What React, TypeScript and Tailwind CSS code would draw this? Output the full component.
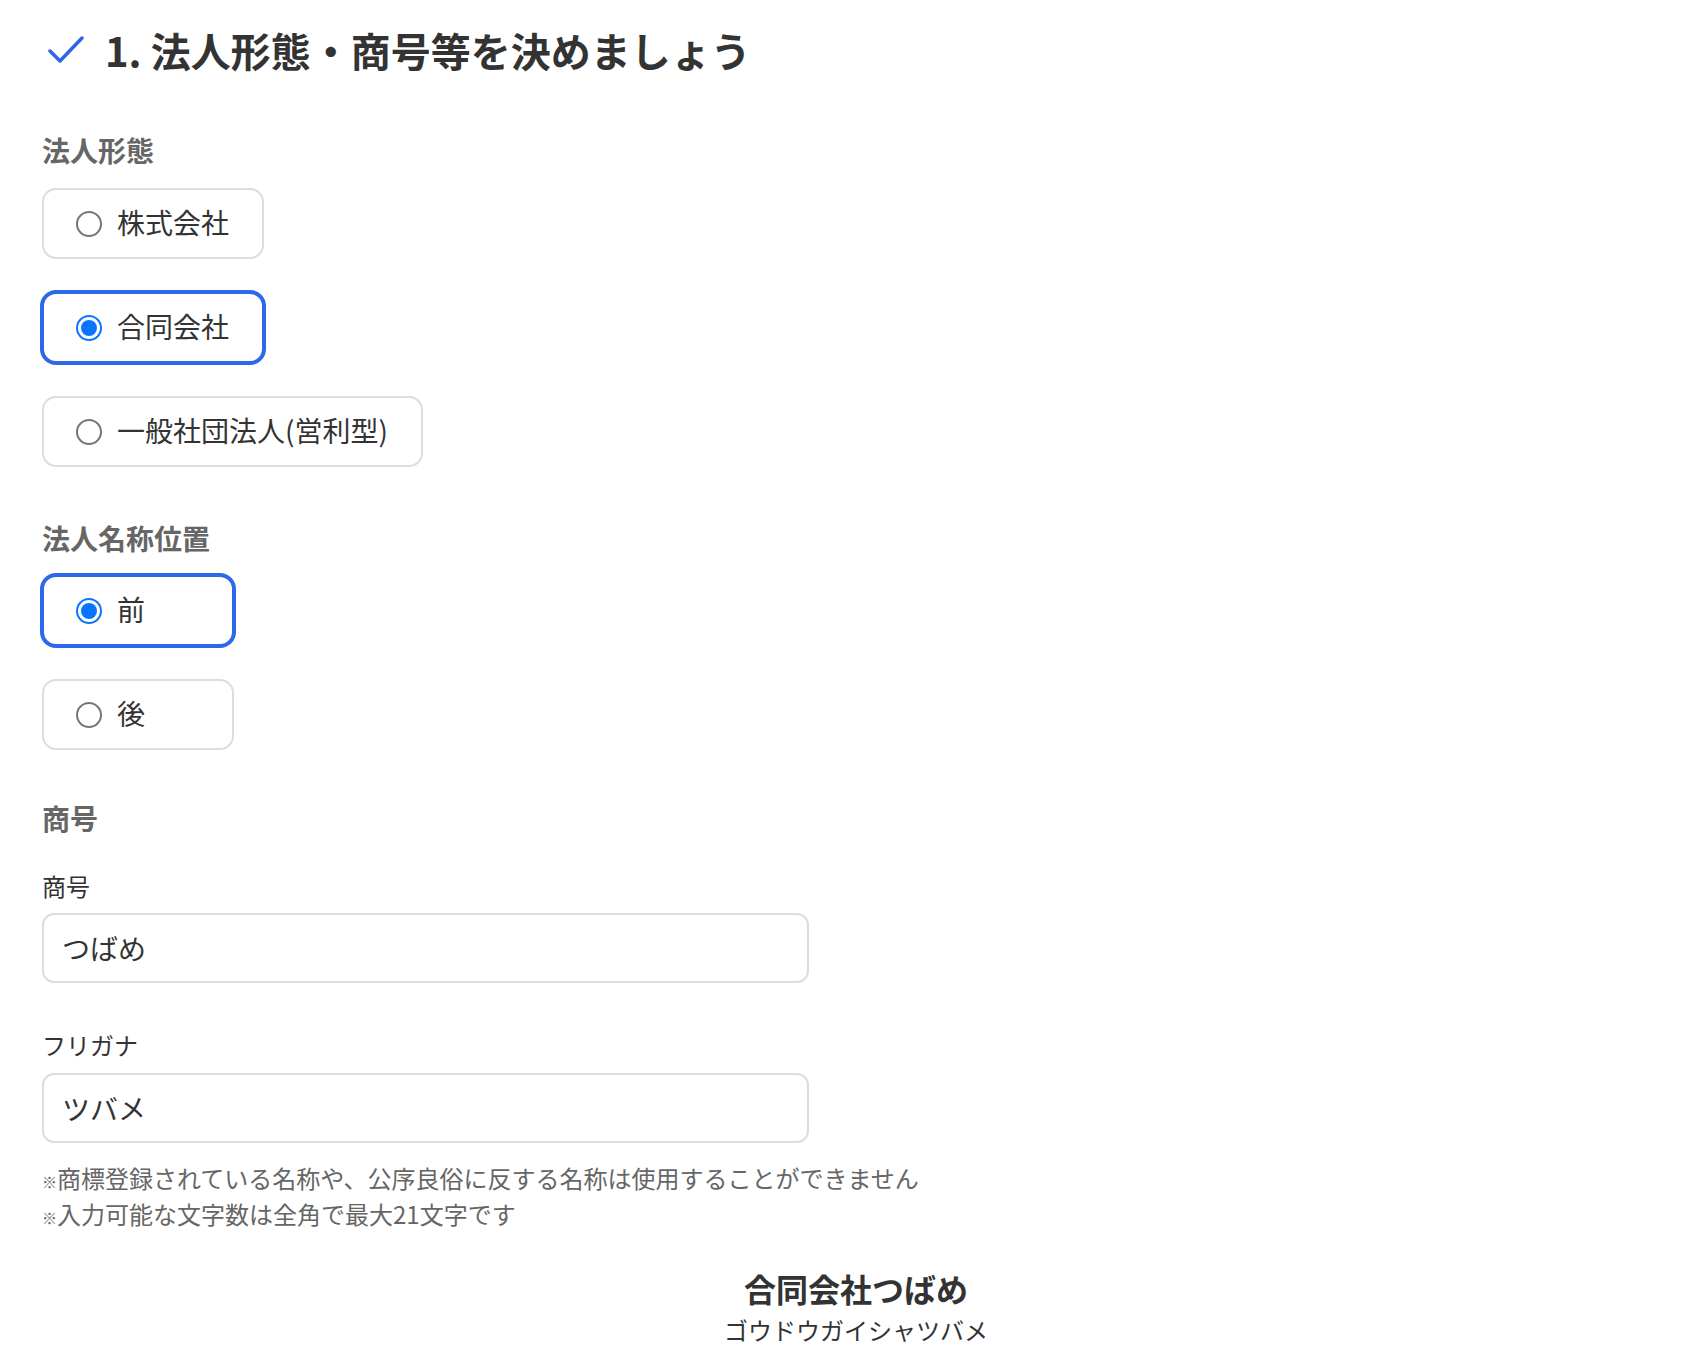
import { useState } from 'react'

type Option = { value: string; label: string }

const corpTypes: Option[] = [
  { value: 'kk', label: '株式会社' },
  { value: 'godo', label: '合同会社' },
  { value: 'ippan', label: '一般社団法人(営利型)' },
]

const positions: Option[] = [
  { value: 'before', label: '前' },
  { value: 'after', label: '後' },
]

function RadioMark({ checked }: { checked: boolean }) {
  return checked ? (
    <span className="flex h-[26px] w-[26px] shrink-0 items-center justify-center rounded-full border-2 border-[#0a74ff] bg-white">
      <span className="h-[16px] w-[16px] rounded-full bg-[#0a74ff]" />
    </span>
  ) : (
    <span className="h-[26px] w-[26px] shrink-0 rounded-full border-2 border-[#767676] bg-white" />
  )
}

function RadioGroup({
  options,
  value,
  onChange,
  minWidth,
}: {
  options: Option[]
  value: string
  onChange: (v: string) => void
  minWidth?: string
}) {
  return (
    <div className="flex flex-col items-start gap-[33px]">
      {options.map((opt) => {
        const checked = opt.value === value
        return (
          <button
            key={opt.value}
            type="button"
            onClick={() => onChange(opt.value)}
            className={`flex h-[71px] items-center gap-[15px] rounded-[14px] border-2 bg-white pl-[32px] pr-[33px] text-left ${minWidth ?? ''} ${
              checked ? 'border-[#2d68ea] ring-2 ring-[#2d68ea]' : 'border-[#dddddd]'
            }`}
          >
            <RadioMark checked={checked} />
            <span className="-mt-[3px] text-[28px] leading-[42px] text-[#333333]">{opt.label}</span>
          </button>
        )
      })}
    </div>
  )
}

// 注記の先頭記号は小さめに表示
function Note({ children }: { children: string }) {
  return (
    <p className="h-[36px]">
      <span className="text-[15px] leading-none">※</span>
      {children}
    </p>
  )
}

export default function App() {
  const [corpType, setCorpType] = useState('godo')
  const [position, setPosition] = useState('before')
  const [name, setName] = useState('つばめ')
  const [kana, setKana] = useState('ツバメ')

  const prefix = corpTypes.find((c) => c.value === corpType)?.label ?? ''
  const kanaPrefix: Record<string, string> = {
    kk: 'カブシキガイシャ',
    godo: 'ゴウドウガイシャ',
    ippan: 'イッパンシャダンホウジン',
  }
  const fullName = position === 'before' ? prefix + name : name + prefix
  const fullKana = position === 'before' ? kanaPrefix[corpType] + kana : kana + kanaPrefix[corpType]

  return (
    <div className="min-h-screen bg-white font-['Noto_Sans_CJK_JP','Noto_Sans',sans-serif] text-[#333333]">
      <div className="w-[1670px] pl-[42px] pt-[20px]">
        {/* 見出し */}
        <div className="flex items-center gap-[21px] pl-[6px]">
          <svg width="36" height="28" viewBox="0 0 36 28" fill="none" className="shrink-0">
            <path d="M2 15 L12 25 L34 2" stroke="#2f64e8" strokeWidth="3.5" strokeLinecap="round" strokeLinejoin="round" />
          </svg>
          <h1 className="text-[40px] font-bold leading-[60px] text-[#333333]">1. 法人形態・商号等を決めましょう</h1>
        </div>

        {/* 法人形態 */}
        <h2 className="mt-[49px] text-[28px] font-bold leading-[42px] text-[#666666]">法人形態</h2>
        <div className="mt-[17px]">
          <RadioGroup options={corpTypes} value={corpType} onChange={setCorpType} />
        </div>

        {/* 法人名称位置 */}
        <h2 className="mt-[50px] text-[28px] font-bold leading-[42px] text-[#666666]">法人名称位置</h2>
        <div className="mt-[16px]">
          <RadioGroup options={positions} value={position} onChange={setPosition} minWidth="w-[192px]" />
        </div>

        {/* 商号 */}
        <h2 className="mt-[47px] text-[28px] font-bold leading-[42px] text-[#666666]">商号</h2>
        <label className="mt-[29px] block text-[24px] leading-[36px] text-[#333333]">商号</label>
        <input
          value={name}
          onChange={(e) => setName(e.target.value)}
          className="mt-[9px] block h-[70px] w-[767px] rounded-[12px] border-2 border-[#dddddd] px-[18px] text-[28px] text-[#333333] outline-none"
        />
        <label className="mt-[44px] block text-[24px] leading-[36px] text-[#333333]">フリガナ</label>
        <input
          value={kana}
          onChange={(e) => setKana(e.target.value)}
          className="mt-[10px] block h-[70px] w-[767px] rounded-[12px] border-2 border-[#dddddd] px-[18px] text-[28px] text-[#333333] outline-none"
        />
        <div className="mt-[17px] text-[24px] leading-[36px] text-[#666666]">
          <Note>商標登録されている名称や、公序良俗に反する名称は使用することができません</Note>
          <Note>入力可能な文字数は全角で最大21文字です</Note>
        </div>

        {/* プレビュー */}
        <div className="mt-[32px] flex flex-col items-center">
          <p className="text-[32px] font-bold leading-[48px] text-[#333333]">{fullName}</p>
          <p className="text-[24px] leading-[36px] text-[#333333]">{fullKana}</p>
        </div>
      </div>
    </div>
  )
}
